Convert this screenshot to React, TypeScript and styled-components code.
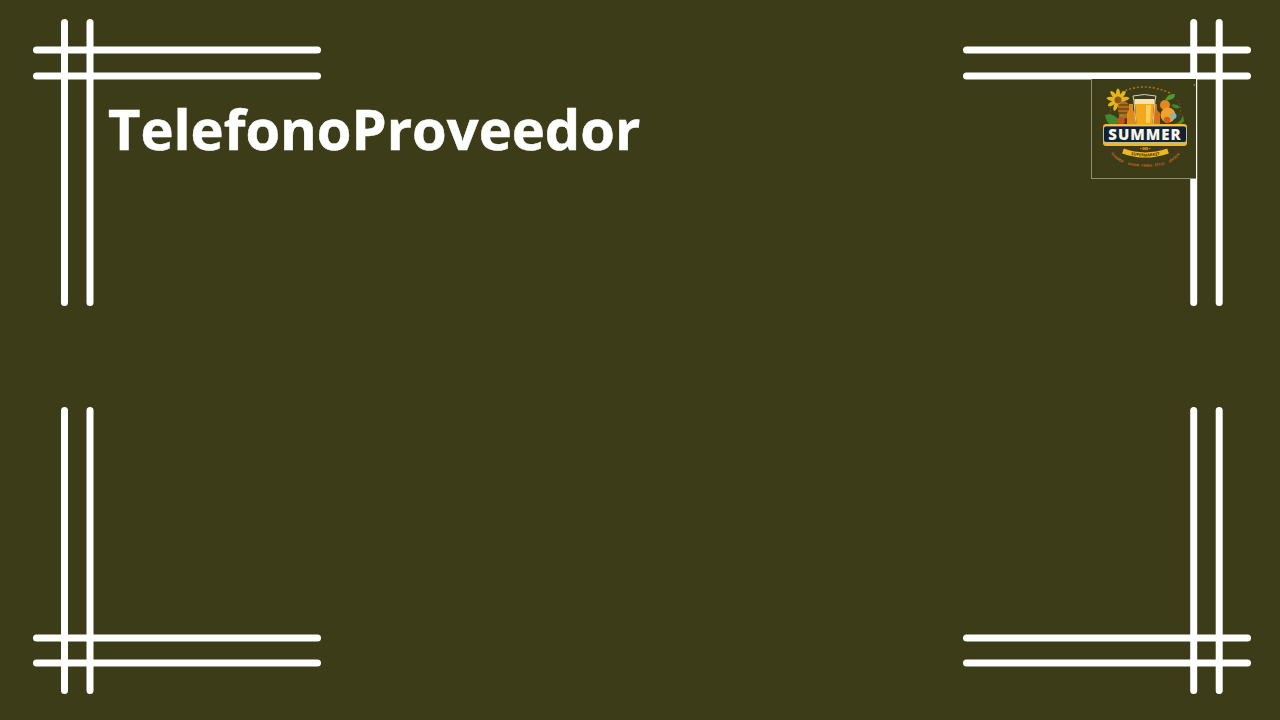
import styled, { createGlobalStyle } from 'styled-components'

const Global = createGlobalStyle`
    html, body {
        margin: 0;
        background: #3c3c18;
    }
`
const Page = styled.div`
    width: 1280px;
    height: 720px;
    box-sizing: border-box;
    padding: 18px 29px 26px 33px;
    display: grid;
    grid-template-columns: 288px 288px;
    grid-template-rows: 288px 288px;
    justify-content: space-between;
    align-content: space-between;
    background: #3c3c18;
    overflow: hidden;
`
const Cell = styled.div`
    display: grid;
    & > * {
        grid-area: 1 / 1;
    }
`
const Ornament = styled.svg`
    display: block;
    width: 288px;
    height: 288px;
`
const Title = styled.h1`
    margin: 74px 0 0 75px;
    align-self: start;
    font-family: "Open Sans", sans-serif;
    font-size: 56px;
    line-height: 72px;
    font-weight: 700;
    color: #ffffff;
    -webkit-text-stroke: 0.5px #ffffff;
    white-space: nowrap;
    width: max-content;
`
const LogoFrame = styled.div`
    justify-self: start;
    align-self: start;
    margin: 61px 0 0 128px;
    width: 105px;
    height: 100px;
    box-sizing: border-box;
    border-left: 1px solid #8f9072;
    border-bottom: 1px solid #8f9072;
    background: #3c3c18;
`
const LogoSvg = styled.svg`
    display: block;
    width: 104px;
    height: 99px;
`

function Corner({ flipX, flipY }: { flipX?: boolean; flipY?: boolean }) {
    const hs = flipY ? [232, 257] : [32, 58]
    const vs = flipX ? [230.7, 256.2] : [31.5, 57]
    return (
        <Ornament viewBox="0 0 288 288">
            {hs.map(y => (
                <line key={y} x1="3.5" x2="284.5" y1={y} y2={y} stroke="#fff" strokeWidth="7" strokeLinecap="round" />
            ))}
            {vs.map(x => (
                <line key={x} x1={x} x2={x} y1="4.5" y2="284.5" stroke="#fff" strokeWidth="7" strokeLinecap="round" />
            ))}
        </Ornament>
    )
}

const petals = [0, 40, 80, 120, 160, 200, 240, 280, 320]

// coordinates: 1 unit = 1px of the frame, origin at its top left
function Logo() {
    return (
        <LogoSvg viewBox="0 0 104 99">
            {/* dotted ring */}
            <path d="M26 15 Q52 1 80 15" fill="none" stroke="#b0701c" strokeWidth="1.6" strokeDasharray="2 2" />
            <path d="M19 36 Q17 28 22 20 M88 36 Q90 28 85 20" fill="none" stroke="#8a5a18" strokeWidth="1" strokeDasharray="1.5 2" />
            <circle cx="102.5" cy="6" r="0.8" fill="#e8961c" />
            {/* left sunflower, wheat and leaves */}
            {petals.map(a => (
                <ellipse key={a} cx="26" cy="15" rx="2" ry="5.5" fill="#e8b41c" transform={`rotate(${a} 26 21)`} />
            ))}
            <circle cx="26" cy="21" r="3.5" fill="#8a5a18" />
            <ellipse cx="32" cy="31" rx="6" ry="9" fill="#b06c1a" />
            <path d="M26 26 h12 M26 30 h12 M26 34 h12" stroke="#4e3210" strokeWidth="1" />
            <path d="M13 36 q8 -3 15 6 q-3 5 -10 4 q-4 -4 -5 -10 z" fill="#3f8a2c" />
            <circle cx="29" cy="42" r="3.8" fill="#c9501c" />
            <path d="M27 38 l4 -2" stroke="#5aa436" strokeWidth="1.4" />
            {/* right fruit */}
            <circle cx="73" cy="26" r="5" fill="#e8861c" />
            <path d="M73 21 q3 -7 10 -6 q0 7 -10 6 z" fill="#4f9a32" />
            <path d="M79 26 q5 -2 9 2 q-4 4 -9 -2 z" fill="#3f8a2c" />
            <circle cx="76" cy="36" r="7.5" fill="#f0a22a" />
            <circle cx="75" cy="41" r="3.2" fill="#d2601c" />
            <path d="M81 45 q7 0 10 -9 l1 6 q-3 5 -11 5 z" fill="#3f8a2c" />
            <circle cx="81.5" cy="37" r="3" fill="#7ab8c8" />
            {/* bottles and glass */}
            <path d="M37 25 h4 v6 l2 3 v11 h-8 v-11 l2 -3 z" fill="#e28a18" />
            <path d="M61 25 h4 v6 l3 3 v11 h-9 v-11 l2 -3 z" fill="#d8701a" />
            <path d="M41 17 q11 -3 23 0 l-1 5 l-2 23 h-17 l-2 -23 z" fill="#3a3a22" stroke="#d8d2b0" strokeWidth="1" />
            <path d="M43 25 h19 l-1.5 20 h-16 z" fill="#f2a81c" />
            <path d="M42.5 20 h20 v5 h-20 z" fill="#f3e3b0" />
            <path d="M54 26 h5 l-1 18 h-4 z" fill="#fad05a" />
            {/* banner */}
            <rect x="11" y="45" width="84" height="22" rx="3" fill="#f0b81c" />
            <rect x="11.5" y="47" width="83" height="16.5" rx="2.5" fill="#10222f" stroke="#f3f0e0" strokeWidth="0.6" />
            <text x="53" y="61" textAnchor="middle" fontFamily="Open Sans, sans-serif" fontWeight="800" fontSize="15" letterSpacing="1" fill="#f6f4e8">SUMMER</text>
            {/* lower ribbon */}
            <text x="53" y="71" textAnchor="middle" fontFamily="Open Sans, sans-serif" fontWeight="700" fontSize="3.4" fill="#f0b81c">• 300 •</text>
            <path d="M31 72 Q53 80 76 72" fill="none" stroke="#f0b81c" strokeWidth="5.2" />
            <path id="badgeArc" d="M31 73.5 Q53 81.5 76 73.5" fill="none" />
            <text fontFamily="Open Sans, sans-serif" fontWeight="700" fontSize="4" fill="#3a3010">
                <textPath href="#badgeArc" startOffset="50%" textAnchor="middle">SUPERMARKET</textPath>
            </text>
            {/* outer lettering, split so it runs round the ribbon */}
            <path id="lowerLeft" d="M18 73 Q23 81 33 85" fill="none" />
            <path id="lowerMid" d="M35 85.5 Q53 90 73 85.5" fill="none" />
            <path id="lowerRight" d="M75 85 Q83 81 89 74" fill="none" />
            <text fontFamily="Open Sans, sans-serif" fontWeight="700" fontSize="3.4" fill="#d0681a">
                <textPath href="#lowerLeft" startOffset="50%" textAnchor="middle">SUMMER·</textPath>
            </text>
            <text fontFamily="Open Sans, sans-serif" fontWeight="700" fontSize="3.4" fill="#d0681a">
                <textPath href="#lowerMid" startOffset="50%" textAnchor="middle">SAVOR · FRESH · STYLE</textPath>
            </text>
            <text fontFamily="Open Sans, sans-serif" fontWeight="700" fontSize="3.4" fill="#d0681a">
                <textPath href="#lowerRight" startOffset="50%" textAnchor="middle">·SEASON</textPath>
            </text>
        </LogoSvg>
    )
}

export default function App() {
    return (
        <Page>
            <Global />
            <Cell>
                <Corner />
                <Title>TelefonoProveedor</Title>
            </Cell>
            <Cell>
                <Corner flipX />
                <LogoFrame>
                    <Logo />
                </LogoFrame>
            </Cell>
            <Cell>
                <Corner flipY />
            </Cell>
            <Cell>
                <Corner flipX flipY />
            </Cell>
        </Page>
    )
}
